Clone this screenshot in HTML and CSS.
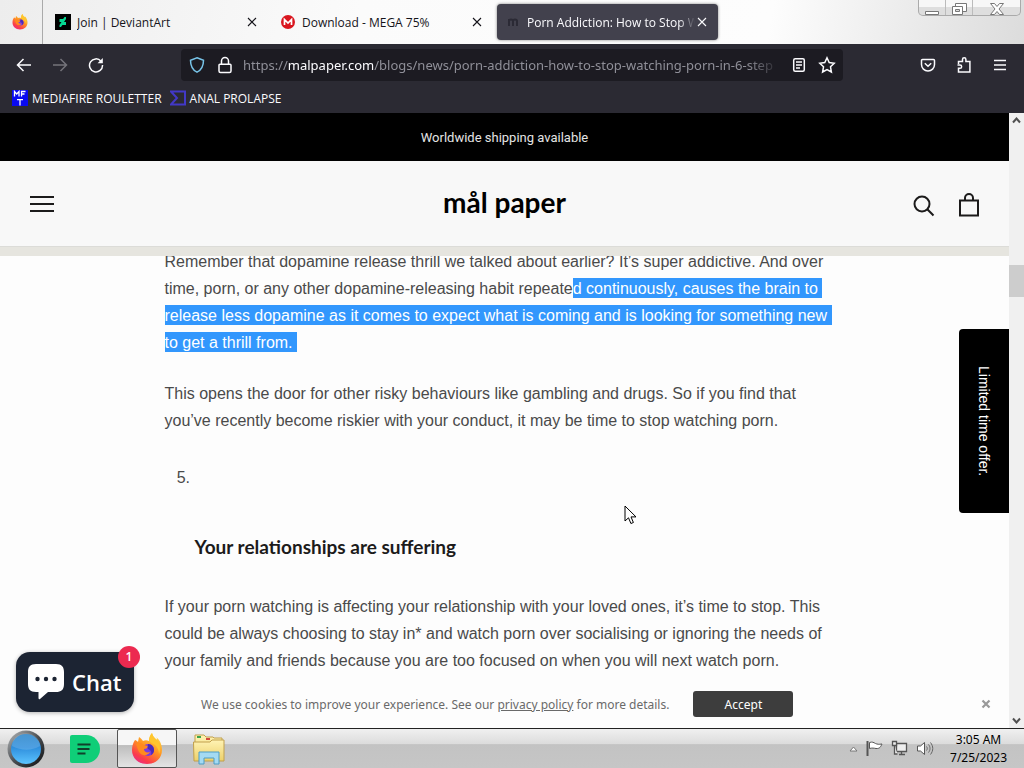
FILE: index.html
```
<!DOCTYPE html>
<html lang="en">
<head>
<meta charset="UTF-8" />
<meta name="viewport" content="width=device-width, initial-scale=1.0"/>
<title>Porn Addiction: How to Stop Watching</title>
<link rel="stylesheet" href="styles.css">
</head>
<body>

<svg width="0" height="0" class="defs" aria-hidden="true">
  <defs>
    <linearGradient id="foxBody" x1="0.8" y1="0" x2="0.2" y2="1">
      <stop offset="0" stop-color="#ffe14a"/>
      <stop offset="0.45" stop-color="#ff9422"/>
      <stop offset="0.8" stop-color="#fb3b4b"/>
      <stop offset="1" stop-color="#e72b8c"/>
    </linearGradient>
    <linearGradient id="folder" x1="0" y1="0" x2="0" y2="1">
      <stop offset="0" stop-color="#fff3b4"/>
      <stop offset="1" stop-color="#ecd06a"/>
    </linearGradient>
    <linearGradient id="orbFill" x1="0" y1="0" x2="0" y2="1">
      <stop offset="0" stop-color="#2783c9"/>
      <stop offset="0.45" stop-color="#2f8fdd"/>
      <stop offset="1" stop-color="#5cc4ff"/>
    </linearGradient>
    <linearGradient id="orbRim" x1="0" y1="0" x2="1" y2="1">
      <stop offset="0" stop-color="#b9bcbe"/>
      <stop offset="0.5" stop-color="#4a4e52"/>
      <stop offset="1" stop-color="#0c0d0f"/>
    </linearGradient>
    <symbol id="firefox" viewBox="0 0 32 32">
      <path fill="url(#foxBody)" d="M4 7c1 0 2 1 3 2l1-5c2 1 3 3 4 4 2-1 4-1 6 0 0-3 1-6 3-8 1 4 3 5 5 7 0-1 0-2-1-3 4 3 6 8 6 13 0 8-6 14-15 14S1 25 1 17c0-4 1-7 3-10z"/>
      <path fill="#ffc62e" d="M21 0c1 4 3 5 5 7 3 4 4 9 2 14 0-5-3-9-6-10-3-2-4-3-4-3 0-3 1-6 3-8z"/>
      <circle cx="17" cy="17" r="6" fill="#7a3be0"/>
      <path fill="#ff8a1e" d="M5 11c3-2 6-1 8 1l4 1c0 2-2 3-4 3 0 3 3 4 6 3-2 4-8 4-10 1-2-2-2-4-4-9z"/>
      <path fill="#4a2bb8" d="M17 11c4 0 6 3 6 6 0 2-1 4-3 5 1-3 0-5-3-6-1-1 0-3 0-5z"/>
    </symbol>
    <symbol id="cross" viewBox="0 0 10 10">
      <path d="M1 1l8 8M9 1L1 9" fill="none" stroke="currentColor" stroke-width="1.1"/>
    </symbol>
  </defs>
</svg>

<!-- tabs -->
<div class="tab-bar">
  <button class="pinned" aria-label="Firefox View"><svg width="16" height="16"><use href="#firefox"/></svg></button>
  <div class="tab">
    <svg width="16" height="16" viewBox="0 0 16 16"><path fill="#000" d="M0 0h16v16H0z"/><path fill="#06d893" d="M11 3v2L9 8h2v3H7.500l-.5.500L6 13H4.500v-2l2-3h-2V5H8l.5-.5L9.500 3z"/></svg>
    <span class="tab-title">Join | DeviantArt</span>
    <button class="close" aria-label="Close tab"><svg width="10" height="10"><use href="#cross"/></svg></button>
  </div>
  <div class="tab">
    <svg width="16" height="16" viewBox="0 0 16 16"><circle cx="8" cy="8" r="7" fill="#d9161f"/><path d="M4.500 11V5.500L8 9l3.500-3.500V11" fill="none" stroke="#fff" stroke-width="1.700"/></svg>
    <span class="tab-title">Download - MEGA 75%</span>
    <button class="close" aria-label="Close tab"><svg width="10" height="10"><use href="#cross"/></svg></button>
  </div>
  <div class="tab selected">
    <svg width="12" height="16" viewBox="0 0 12 16"><path d="M2 12V5M2 7c0-2 4-2 4 0v5M6 7c0-2 4-2 4 0v5" fill="none" stroke="#2b2a35" stroke-width="2"/></svg>
    <span class="tab-title">Porn Addiction: How to Stop W</span>
    <button class="close" aria-label="Close tab"><svg width="10" height="10"><use href="#cross"/></svg></button>
  </div>
  <div class="window-buttons">
    <button class="win min" aria-label="Minimize"><svg width="16" height="14" viewBox="0 0 16 14"><path d="M1.500 9.500h13v3h-13z" fill="#fff" stroke="#777"/></svg></button>
    <button class="win" aria-label="Restore"><svg width="16" height="14" viewBox="0 0 16 14"><path d="M4.500 1.500h11v8h-11z" fill="#fff" stroke="#777"/><path d="M1.500 4.500h10v8h-10z" fill="#fff" stroke="#777"/><path d="M4.500 7.500h4v2h-4z" fill="#ddd" stroke="#777"/></svg></button>
    <button class="win exit" aria-label="Close"><svg width="16" height="14" viewBox="0 0 16 14"><path d="M1.500 1.500h4L8 4.500l2.500-3h4L10 7l4.500 5.500h-4L8 9.500l-2.500 3h-4L6 7z" fill="#fff" stroke="#777"/></svg></button>
  </div>
</div>

<!-- toolbar -->
<div class="toolbar">
  <button class="tool" aria-label="Back"><svg width="16" height="16" viewBox="0 0 16 16"><path d="M15 8H1.500M7.500 2l-6 6 6 6"/></svg></button>
  <button class="tool off" aria-label="Forward"><svg width="16" height="16" viewBox="0 0 16 16"><path d="M1 8h13.500M8.500 2l6 6-6 6"/></svg></button>
  <button class="tool" aria-label="Reload"><svg width="16" height="16" viewBox="0 0 16 16"><path d="M13 4.200A6.500 6.500 0 1 0 14.500 8"/><path d="M14.800 1v5.200H9.600z" fill="currentColor" stroke="none"/></svg></button>
  <div class="url-bar">
    <svg width="16" height="16" viewBox="0 0 16 16" class="shield"><path d="M8 .8l6.500 2.400c0 6-1.500 9.500-6.500 12C3 12.700 1.500 9.200 1.500 3.200z"/></svg>
    <svg width="14" height="18" viewBox="0 0 14 18"><path d="M2 8.200h10a1 1 0 0 1 1 1V15a1.500 1.500 0 0 1-1.500 1.500h-9A1.500 1.500 0 0 1 1 15V9.200a1 1 0 0 1 1-1zM3.500 8V5a3.500 3.500 0 0 1 7 0v3"/></svg>
    <div class="url">https://<b>malpaper.com</b>/blogs/news/porn-addiction-how-to-stop-watching-porn-in-6-step</div>
    <button class="url-btn" aria-label="Reader view"><svg width="14" height="16" viewBox="0 0 14 16"><rect x="1.700" y="1.700" width="10.600" height="12.600" rx="1.500"/><path d="M4 5h6M4 8h6M4 11h4"/></svg></button>
    <button class="url-btn" aria-label="Bookmark"><svg width="18" height="18" viewBox="0 0 18 18"><path d="M9 1.800l2.200 4.700 5 .7-3.700 3.600.9 5.200L9 13.500 4.600 16l.9-5.200L1.800 7.200l5-.7z"/></svg></button>
  </div>
  <button class="tool" aria-label="Pocket"><svg width="16" height="16" viewBox="0 0 16 16"><path d="M2.500 2.500h11a1 1 0 0 1 1 1V7.500a6.500 6.500 0 0 1-13 0V3.500a1 1 0 0 1 1-1zM4.800 6.200L8 9.300l3.200-3.100"/></svg></button>
  <button class="tool" aria-label="Extensions"><svg width="16" height="18" viewBox="0 0 16 18"><path d="M2.500 8V5.500h4V3.500a1.700 1.700 0 0 1 3.400 0v2h4V16H2.500v-3.700H4a1.500 1.500 0 0 0 0-3.300H1.500"/></svg></button>
  <button class="tool" aria-label="Menu"><svg width="14" height="14" viewBox="0 0 14 14"><path d="M1 2.500h12M1 7h12M1 11.500h12"/></svg></button>
</div>

<!-- bookmarks -->
<div class="bookmarks">
  <a href="#"><svg width="16" height="16" viewBox="0 0 16 16"><path fill="#0a0af0" d="M0 0h16v16H0z"/><path d="M2.500 6.500v-5l2.200 2.500L7 1.500v5M9.500 6.500v-5h4M9.500 4h3M5 9.700h6M8 10v5.500" fill="none" stroke="#fff" stroke-width="1.300"/></svg>MEDIAFIRE ROULETTER</a>
  <a href="#"><svg width="16" height="16" viewBox="0 0 16 16"><path d="M1 1.500h14v13H1L7 8z" fill="none" stroke="#4238c8" stroke-width="2"/></svg>ANAL PROLAPSE</a>
</div>

<!-- page -->
<div class="page">
  <div class="site">
    <div class="announcement">Worldwide shipping available</div>
    <header class="header">
      <button class="icon-btn" aria-label="Menu"><svg width="24" height="18" viewBox="0 0 24 18"><path d="M0 2h24M0 9h24M0 16h24"/></svg></button>
      <a class="logo" href="#">mål paper</a>
      <div class="header-right">
        <button class="icon-btn" aria-label="Search"><svg width="22" height="22" viewBox="0 0 22 22"><circle cx="9" cy="9" r="7.500"/><path d="M14.300 14.300l6.200 6.200"/></svg></button>
        <button class="icon-btn" aria-label="Cart"><svg width="20" height="24" viewBox="0 0 20 24"><path d="M1 7.500h18v15H1zM6 7.500V5a4 4 0 0 1 8 0v2.500"/></svg></button>
      </div>
    </header>
    <div class="strip"></div>
    <article class="article">
      <p>Remember that dopamine release thrill we talked about earlier? It’s super addictive. And over<br>
      time, porn, or any other dopamine-releasing habit repeate<span class="marked">d continuously, causes the brain to&nbsp;<br>
      release less dopamine as it comes to expect what is coming and is looking for something new&nbsp;<br>
      to get a thrill from.&nbsp;</span></p>
      <p>This opens the door for other risky behaviours like gambling and drugs. So if you find that<br>
      you’ve recently become riskier with your conduct, it may be time to stop watching porn.</p>
      <ol start="5">
        <li>&nbsp;<h3>Your relationships are suffering</h3></li>
      </ol>
      <p>If your porn watching is affecting your relationship with your loved ones, it’s time to stop. This<br>
      could be always choosing to stay in* and watch porn over socialising or ignoring the needs of<br>
      your family and friends because you are too focused on when you will next watch porn.</p>
    </article>

    <button class="offer">Limited time offer.</button>
    <div class="cookies">
      <p>We use cookies to improve your experience. See our <a href="#">privacy policy</a> for more details.</p>
      <button class="accept">Accept</button>
      <button class="dismiss" aria-label="Dismiss"><svg width="10" height="10" viewBox="0 0 10 10"><path d="M1.500 1.500l7 7M8.500 1.500l-7 7" stroke="#999" stroke-width="2.200"/></svg></button>
    </div>
    <button class="chat">
      <svg width="36" height="36" viewBox="0 0 36 36"><path fill="#fff" d="M8 0h20c6 0 8 3 8 8v12c0 6-3 8-8 8h-8l-8 7c-1 .5-1.500 0-1.500-1v-6H8c-6 0-8-3-8-8V8c0-5 2-8 8-8z"/><g fill="#1c2433"><circle cx="9.500" cy="15" r="2.200"/><circle cx="18" cy="15" r="2.200"/><circle cx="26.500" cy="15" r="2.200"/></g></svg>
      Chat
      <span class="badge">1</span>
    </button>
    <svg class="cursor" width="13" height="20" viewBox="0 0 13 20"><path d="M1 1v15l3.500-3.200 2.400 5.700 2.500-1-2.400-5.600H12z" fill="#fff" stroke="#000"/></svg>
  </div>
  <div class="scrollbar">
    <svg width="9" height="7" viewBox="0 0 9 7"><path d="M1 5.500l3.500-4 3.500 4"/></svg>
    <div class="thumb"></div>
    <svg width="9" height="7" viewBox="0 0 9 7"><path d="M1 1.500l3.500 4 3.500-4"/></svg>
  </div>
</div>

<!-- taskbar -->
<div class="taskbar">
  <button class="start" aria-label="Start"><svg width="40" height="38" viewBox="0 0 40 38"><circle cx="20" cy="19" r="18.500" fill="url(#orbRim)"/><circle cx="20" cy="19" r="15" fill="url(#orbFill)"/><path d="M6 16a14 13 0 0 1 28 0c-9 5-18 5-28 0z" fill="#fff" opacity=".15"/></svg></button>
  <button class="task" aria-label="Notes"><svg width="30" height="28" viewBox="0 0 30 28"><path fill="#0fce78" d="M2 0h14a14 14 0 0 1 0 28H2a2 2 0 0 1-2-2V2a2 2 0 0 1 2-2z"/><path d="M7.500 9.500h13M7.500 14h12M7.500 18.500h8" stroke="#10402b" stroke-width="2"/></svg></button>
  <button class="task running" aria-label="Firefox"><svg width="32" height="32"><use href="#firefox"/></svg></button>
  <button class="task files" aria-label="Explorer"><svg width="34" height="32" viewBox="0 0 34 32"><path d="M3 4V2h9l2 2h7l1 1h8v22H3z" fill="url(#folder)" stroke="#c1a04c"/><path d="M5 3h4v2H5z" fill="#3aa34b"/><path d="M14 5h4v2h-4z" fill="#d3483c"/><path d="M22 7h4v2h-4z" fill="#3c86d3"/><path d="M1.500 9H18l2-2h12v21H2z" fill="url(#folder)" stroke="#c1a04c"/><path d="M7 31V19h20v12h-5v-6H12v6z" fill="#a4daf2" stroke="#4c9dc6"/></svg></button>
  <div class="tray">
    <svg width="9" height="6" viewBox="0 0 9 6"><path d="M4.500 1L8 5H1z" fill="#fff" stroke="#777"/></svg>
    <svg width="17" height="17" viewBox="0 0 17 17"><path d="M1.500 1v15" stroke="#555" stroke-width="2"/><path d="M3.500 2.500c3-1 4 0 6 1 2 .8 3 1 6.500.5-1 2-2 5-6 4.500-2-.3-4-.8-6.500 0z" fill="#fff" stroke="#555"/></svg>
    <svg width="17" height="17" viewBox="0 0 17 17"><path d="M5.500 3.500h10v8h-10zM8 14.500h6M10.500 12v2" fill="#eee" stroke="#555" stroke-width="1.300"/><path d="M1.500 1.500h4v4h-4zM3.500 5.500V14h3" fill="#eee" stroke="#555" stroke-width="1.300"/></svg>
    <svg width="18" height="15" viewBox="0 0 18 15"><path d="M1.500 5h3L8.500 1.500v12L4.500 10h-3z" fill="#fff" stroke="#555"/><path d="M10.500 5.500c1 1.500 1 2.500 0 4M12.500 3.500c2 2.500 2 5.500 0 8M14.500 1.500c3 4 3 8 0 12" fill="none" stroke="#666"/></svg>
  </div>
  <div class="clock">3:05 AM<br>7/25/2023</div>
</div>

</body>
</html>
```
FILE: styles.css
```
* { margin: 0; padding: 0; box-sizing: border-box; }
html, body { height: 100%; }
body {
  display: flex;
  flex-direction: column;
  overflow: hidden;
  font-family: "Open Sans", sans-serif;
  font-size: 12px;
  background: #fff;
}
button {
  background: none;
  border: none;
  font: inherit;
  color: inherit;
  cursor: pointer;
}
a { color: inherit; }
svg { display: block; flex-shrink: 0; }
.defs { position: absolute; }

/* tabs */
.tab-bar {
  display: flex;
  align-items: center;
  height: 44px;
  flex-shrink: 0;
  background: linear-gradient(100deg, #ededed 0%, #fbfbfb 35%, #fdfdfd 75%, #dcdcdc 100%);
  color: #15141a;
}
.pinned {
  width: 43px;
  height: 44px;
  padding-left: 12px;
  border-right: 1px solid #aaa;
}
.tab {
  display: flex;
  align-items: center;
  gap: 6px;
  width: 225px;
  height: 36px;
  padding: 0 11px 0 12px;
}
.tab-title {
  flex: 1;
  overflow: hidden;
  white-space: nowrap;
}
.selected {
  width: 221px;
  margin-left: 4px;
  padding-left: 10px;
  gap: 8px;
  border-radius: 4px;
  background: #42414d;
  color: #fbfbfe;
  box-shadow: 0 0 3px rgba(0,0,0,0.5);
}
.selected .tab-title {
  margin-right: -6px;
  -webkit-mask-image: linear-gradient(to left, transparent, #000 16px);
  mask-image: linear-gradient(to left, transparent, #000 16px);
}
.window-buttons {
  display: flex;
  align-self: flex-start;
  height: 16px;
  margin-left: auto;
  margin-right: 3px;
  border: 1px solid #aaa;
  border-top: none;
  border-radius: 0 0 5px 5px;
  background: linear-gradient(#f7f7f7 50%, #dedede 50%);
}
.win {
  display: flex;
  justify-content: center;
  align-items: center;
  width: 27px;
  padding-top: 2px;
  border-right: 1px solid #bbb;
}
.exit { width: 47px; border: none; }

/* toolbar */
.toolbar {
  display: flex;
  align-items: center;
  height: 41px;
  flex-shrink: 0;
  padding: 0 6px;
  background: #2b2a33;
  color: #fbfbfe;
}
.toolbar svg {
  fill: none;
  stroke: currentColor;
  stroke-width: 1.5;
}
.tool {
  display: flex;
  justify-content: center;
  width: 36px;
}
.off { opacity: 0.35; }
.url-bar {
  display: flex;
  align-items: center;
  flex: 1;
  min-width: 0;
  height: 32px;
  margin: 0 67px;
  padding: 0 7px 0 8px;
  border-radius: 4px;
  background: #1c1b22;
}
.url-bar .shield { margin-right: 13px; stroke: #78c4e8; }
.url {
  flex: 1;
  margin-left: 11px;
  margin-right: 12px;
  overflow: hidden;
  white-space: nowrap;
  font-family: "Noto Sans", sans-serif;
  font-size: 13px;
  color: #8f8f98;
  -webkit-mask-image: linear-gradient(to left, transparent, #000 32px);
  mask-image: linear-gradient(to left, transparent, #000 32px);
}
.url b { font-weight: 400; color: #fbfbfe; }
.url-btn + .url-btn { margin-left: 12px; }

.bookmarks {
  display: flex;
  align-items: center;
  gap: 8px;
  height: 28px;
  flex-shrink: 0;
  padding: 0 12px 2px;
  background: #2b2a33;
  color: #fbfbfe;
}
.bookmarks a {
  display: flex;
  align-items: center;
  gap: 4px;
  text-decoration: none;
}

/* page */
.page { display: flex; flex: 1; min-height: 0; }
.site {
  position: relative;
  display: flex;
  flex-direction: column;
  flex: 1;
  overflow: hidden;
  background: #fdfdfd;
}
.announcement {
  height: 48px;
  flex-shrink: 0;
  line-height: 50px;
  text-align: center;
  font-family: Roboto, sans-serif;
  font-size: 13px;
  background: #000;
  color: #e4e4e4;
}
.header {
  display: flex;
  align-items: center;
  justify-content: space-between;
  height: 86px;
  flex-shrink: 0;
  padding: 0 30px;
  background: #f8f8f8;
  border-bottom: 1px solid #dcdcd8;
}
.header svg { fill: none; stroke: #1c1b1b; stroke-width: 2; }
.logo {
  padding: 0 0 4px 42px;
  font-family: Lato, sans-serif;
  font-size: 28px;
  font-weight: 700;
  text-decoration: none;
  color: #000;
}
.header-right {
  display: flex;
  align-items: flex-end;
  gap: 24px;
  padding-top: 2px;
}
.strip {
  position: relative;
  height: 9px;
  flex-shrink: 0;
  background: #e6e5df;
}
.article {
  flex: 1;
  min-height: 0;
  width: 680px;
  margin: -8px auto 0;
  font-family: "Liberation Sans", Arial, sans-serif;
  font-size: 16px;
  line-height: 27px;
  white-space: nowrap;
  color: #4a4a4a;
}
.article p { margin-bottom: 24px; }
.marked { padding: 2px 0 1px; background: #3297fd; color: #fff; }
.article ol { margin: 30px 0 33px 30px; }
.article h3 {
  padding-top: 42px;
  font-family: Lato, sans-serif;
  font-size: 19px;
  font-weight: 700;
  color: #1c1b1b;
}

/* things that float over the article */
.offer {
  position: absolute;
  top: 216px;
  right: 0;
  width: 50px;
  height: 184px;
  border-radius: 4px 0 0 4px;
  background: #000;
  color: #fff;
  font-family: "Liberation Sans", Arial, sans-serif;
  font-size: 14px;
  writing-mode: vertical-rl;
}
.cookies {
  position: absolute;
  left: 0;
  right: 0;
  bottom: 0;
  display: flex;
  align-items: center;
  gap: 24px;
  height: 48px;
  padding: 0 18px 0 201px;
  background: #fdfdfd;
  font-family: "Noto Sans", sans-serif;
  font-size: 12px;
  color: #6a6a6a;
}
.accept {
  width: 100px;
  height: 26px;
  border-radius: 3px;
  background: #3d3d3d;
  color: #fff;
}
.dismiss { margin-left: auto; }
.chat {
  position: absolute;
  left: 16px;
  bottom: 16px;
  display: flex;
  align-items: center;
  gap: 8px;
  height: 60px;
  width: 118px;
  padding: 0 12px;
  border-radius: 14px;
  background: #1c2433;
  color: #fff;
  font-size: 22px;
  font-weight: 600;
  box-shadow: 0 1px 4px rgba(0,0,0,0.3);
}
.badge {
  position: absolute;
  top: -6px;
  right: -6px;
  width: 22px;
  height: 22px;
  border-radius: 50%;
  background: #ec2a50;
  font-size: 12px;
  line-height: 22px;
}
.cursor { position: absolute; left: 624px; top: 392px; }

.scrollbar {
  display: flex;
  flex-direction: column;
  align-items: center;
  width: 15px;
  padding: 4px 0;
  background: #f0f0f0;
}
.scrollbar svg { fill: none; stroke: #505050; stroke-width: 2; }
.thumb {
  width: 15px;
  height: 32px;
  margin-top: 141px;
  margin-bottom: auto;
  background: #cdcdcd;
}

/* taskbar */
.taskbar {
  display: flex;
  align-items: center;
  height: 40px;
  flex-shrink: 0;
  padding: 0 17px 0 6px;
  border-top: 1px solid #222;
  background: linear-gradient(#f0f0f0, #dcdcdc 38%, #c3c3c3 40%, #c6c6c6);
  color: #000;
}
.start { width: 40px; }
.task {
  display: flex;
  justify-content: center;
  align-items: center;
  width: 60px;
  height: 39px;
  margin-left: 9px;
}
.running {
  margin-left: 2px;
  border: 1px solid #555;
  border-radius: 2px;
  background: linear-gradient(#f6f6f6 40%, #bdbdbd 42%, #e4e4e4);
}
.files { margin-left: 2px; }
.tray {
  display: flex;
  align-items: center;
  gap: 8px;
  margin-left: auto;
}
.clock {
  margin-left: 16px;
  text-align: center;
  font-family: "Noto Sans", sans-serif;
  font-size: 12px;
  line-height: 18px;
}
```
